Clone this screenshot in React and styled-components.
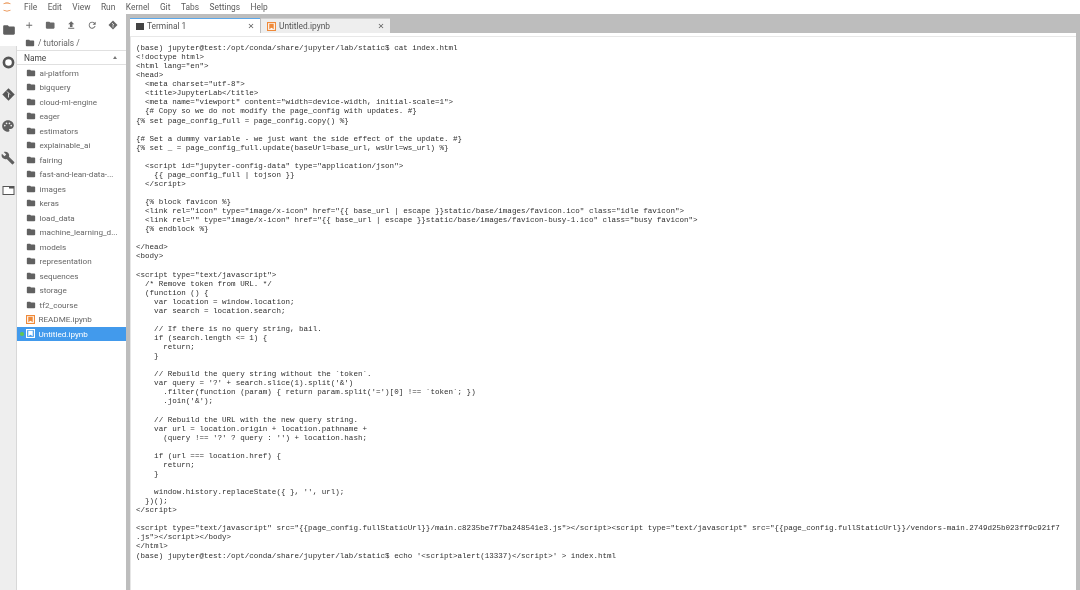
import React from "react";
import styled, { createGlobalStyle } from "styled-components";
import {
  MdAdd,
  MdBuild,
  MdClose,
  MdFileUpload,
  MdFolder,
  MdPalette,
  MdRefresh,
} from "react-icons/md";

const GlobalStyle = createGlobalStyle`
  html, body {
    margin: 0;
    padding: 0;
    background: #fff;
  }
`;

const menus = ["File", "Edit", "View", "Run", "Kernel", "Git", "Tabs", "Settings", "Help"];

const folders = [
  "ai-platform",
  "bigquery",
  "cloud-ml-engine",
  "eager",
  "estimators",
  "explainable_ai",
  "fairing",
  "fast-and-lean-data-...",
  "images",
  "keras",
  "load_data",
  "machine_learning_d...",
  "models",
  "representation",
  "sequences",
  "storage",
  "tf2_course",
];

const terminalText = `(base) jupyter@test:/opt/conda/share/jupyter/lab/static$ cat index.html
<!doctype html>
<html lang="en">
<head>
  <meta charset="utf-8">
  <title>JupyterLab</title>
  <meta name="viewport" content="width=device-width, initial-scale=1">
  {# Copy so we do not modify the page_config with updates. #}
{% set page_config_full = page_config.copy() %}

{# Set a dummy variable - we just want the side effect of the update. #}
{% set _ = page_config_full.update(baseUrl=base_url, wsUrl=ws_url) %}

  <script id="jupyter-config-data" type="application/json">
    {{ page_config_full | tojson }}
  </script>

  {% block favicon %}
  <link rel="icon" type="image/x-icon" href="{{ base_url | escape }}static/base/images/favicon.ico" class="idle favicon">
  <link rel="" type="image/x-icon" href="{{ base_url | escape }}static/base/images/favicon-busy-1.ico" class="busy favicon">
  {% endblock %}

</head>
<body>

<script type="text/javascript">
  /* Remove token from URL. */
  (function () {
    var location = window.location;
    var search = location.search;

    // If there is no query string, bail.
    if (search.length <= 1) {
      return;
    }

    // Rebuild the query string without the \`token\`.
    var query = '?' + search.slice(1).split('&')
      .filter(function (param) { return param.split('=')[0] !== \`token\`; })
      .join('&');

    // Rebuild the URL with the new query string.
    var url = location.origin + location.pathname +
      (query !== '?' ? query : '') + location.hash;

    if (url === location.href) {
      return;
    }

    window.history.replaceState({ }, '', url);
  })();
</script>

<script type="text/javascript" src="{{page_config.fullStaticUrl}}/main.c8235be7f7ba248541e3.js"></script><script type="text/javascript" src="{{page_config.fullStaticUrl}}/vendors-main.2749d25b023ff9c921f7
.js"></script></body>
</html>
(base) jupyter@test:/opt/conda/share/jupyter/lab/static$ echo '<script>alert(13337)</script>' > index.html`;

const Page = styled.div`
  width: 1080px;
  height: 590px;
  display: flex;
  flex-direction: column;
  overflow: hidden;
  background: #bdbdbd;
  font-family: Roboto, "Liberation Sans", sans-serif;
  color: #555;
  filter: blur(0.45px);
`;

const MenuBar = styled.div`
  height: 14px;
  flex: none;
  display: flex;
  align-items: center;
  background: #fff;
`;

const Logo = styled.svg`
  width: 10px;
  height: 12px;
  margin: 0 12px 0 2px;
`;

const MenuItem = styled.span`
  font-size: 8.4px;
  margin-right: 10.5px;
  color: #5c5c5c;
`;

const Body = styled.div`
  flex: 1;
  display: flex;
  min-height: 0;
`;

const SideBar = styled.div`
  width: 17px;
  flex: none;
  display: flex;
  flex-direction: column;
  background: #eeeeee;
  color: #5f5f5f;
  font-size: 14px;
`;

const SideItem = styled.div`
  height: 32px;
  flex: none;
  box-sizing: border-box;
  display: flex;
  align-items: center;
  justify-content: center;
  background: ${({ $active }) => ($active ? "#fff" : "transparent")};
  border-right: ${({ $active }) => ($active ? "none" : "1px solid #d8d8d8")};
`;

const SideRest = styled.div`
  flex: 1;
  border-right: 1px solid #d8d8d8;
`;

const FilePanel = styled.div`
  width: 109px;
  flex: none;
  display: flex;
  flex-direction: column;
  background: #fff;
`;

const FileToolbar = styled.div`
  height: 22px;
  display: flex;
  align-items: center;
  gap: 10.6px;
  padding-left: 7px;
  color: #6a6a6a;
  font-size: 10.4px;

  svg {
    display: block;
  }
`;

const Breadcrumb = styled.div`
  height: 14px;
  display: flex;
  align-items: center;
  gap: 3px;
  padding-left: 8px;
  font-size: 8.4px;
  color: #666;
`;

const HeaderRow = styled.div`
  height: 15px;
  display: flex;
  align-items: center;
  justify-content: space-between;
  padding: 0 9px 0 7px;
  font-size: 8.4px;
  color: #444;
  border-top: 1px solid #e0e0e0;
  border-bottom: 1px solid #e0e0e0;
  box-sizing: border-box;
`;

const Caret = styled.span`
  width: 0;
  height: 0;
  border-left: 2.5px solid transparent;
  border-right: 2.5px solid transparent;
  border-bottom: 3px solid #777;
`;

const FileList = styled.div`
  display: flex;
  flex-direction: column;
  padding-top: 0.5px;
`;

const FileRow = styled.div`
  height: 14.5px;
  position: relative;
  display: flex;
  align-items: center;
  gap: 3.5px;
  padding-left: 9px;
  font-size: 8.1px;
  white-space: nowrap;
  color: ${({ $selected }) => ($selected ? "#fff" : "#666")};
  background: ${({ $selected }) => ($selected ? "#429aec" : "transparent")};
`;

const RunningDot = styled.span`
  position: absolute;
  left: 3px;
  top: 5.5px;
  width: 3.5px;
  height: 3.5px;
  border-radius: 50%;
  background: #62c554;
`;

const Splitter = styled.div`
  width: 4px;
  flex: none;
  background: #bdbdbd;
`;

const Main = styled.div`
  flex: 1;
  display: flex;
  flex-direction: column;
  min-width: 0;
  background: #fff;
`;

const TabBar = styled.div`
  height: 19px;
  flex: none;
  display: flex;
  align-items: flex-end;
  gap: 1px;
  background: #bdbdbd;
`;

const Tab = styled.div`
  width: ${({ $active }) => ($active ? "130px" : "129px")};
  height: 15px;
  box-sizing: border-box;
  display: flex;
  align-items: center;
  gap: 3px;
  padding: 0 5px 0 6px;
  font-size: 8.4px;
  color: #555;
  background: ${({ $active }) => ($active ? "#fff" : "#eeeeee")};
  border-top: ${({ $active }) => ($active ? "1.5px solid #5aa7ea" : "1px solid #d0d0d0")};
`;

const TabTitle = styled.span`
  flex: 1;
`;

const TerminalIcon = styled.span`
  width: 8px;
  height: 7px;
  background: #444;
  flex: none;
`;

const TabStrip = styled.div`
  height: 4px;
  flex: none;
  box-sizing: border-box;
  background: #fff;
  border-bottom: 1px solid #e8e8e8;
`;

const TerminalArea = styled.div`
  flex: 1;
  background: #fff;
  border-left: 1px solid #e6e6e6;
  padding: 7px 0 0 5px;
`;

const TerminalText = styled.pre`
  margin: 0;
  font-family: "Liberation Mono", monospace;
  font-size: 7.55px;
  line-height: 9.07px;
  color: #2f2f2f;
`;

const NotebookIcon = ({ color, fill }) => (
  <svg width="9" height="9" viewBox="0 0 8 8">
    <rect x="0.5" y="0.5" width="7" height="7" fill={fill} stroke={color} />
    <path d="M2 1.5h4v5L4 5 2 6.5z" fill={color} />
  </svg>
);

const App = () => {
  return (
    <>
      <GlobalStyle />
      <Page>
        <MenuBar>
          <Logo viewBox="0 0 10 12">
            <path d="M1 3.2C2.6 .9 7.4 .9 9 3.2 7 2.1 3 2.1 1 3.2z" fill="#e67e30" />
            <path d="M1 8.8c1.6 2.3 6.4 2.3 8 0-2 1.1-6 1.1-8 0z" fill="#e67e30" />
          </Logo>
          {menus.map((menu) => (
            <MenuItem key={menu}>{menu}</MenuItem>
          ))}
        </MenuBar>
        <Body>
          <SideBar>
            <SideItem $active>
              <MdFolder />
            </SideItem>
            <SideItem>
              <svg width="13" height="13" viewBox="0 0 13 13">
                <circle cx="6.5" cy="6.5" r="4.6" fill="#fff" stroke="#555" strokeWidth="2.6" />
              </svg>
            </SideItem>
            <SideItem>
              <svg width="13" height="13" viewBox="0 0 13 13">
                <path d="M6.5 .3l6.2 6.2-6.2 6.2L.3 6.5z" fill="#555" />
                <path d="M5 3.5l3 3M6.5 5.5v4" stroke="#eee" strokeWidth="0.9" fill="none" />
              </svg>
            </SideItem>
            <SideItem>
              <MdPalette />
            </SideItem>
            <SideItem>
              <MdBuild />
            </SideItem>
            <SideItem>
              <svg width="13" height="13" viewBox="0 0 13 13">
                <rect x="1" y="2.5" width="11" height="8" fill="#fff" stroke="#555" />
                <rect x="7" y="2.5" width="5" height="2" fill="#555" />
              </svg>
            </SideItem>
            <SideRest />
          </SideBar>
          <FilePanel>
            <FileToolbar>
              <MdAdd />
              <MdFolder />
              <MdFileUpload />
              <MdRefresh />
              <svg width="10" height="10" viewBox="0 0 10 10">
                <path d="M5 .5L9.5 5 5 9.5.5 5z" fill="#666" />
                <path d="M4 3l2 2M5 4.5v3" stroke="#fff" strokeWidth="0.7" />
              </svg>
            </FileToolbar>
            <Breadcrumb>
              <MdFolder size={10} color="#616161" />
              <span>/ tutorials /</span>
            </Breadcrumb>
            <HeaderRow>
              <span>Name</span>
              <Caret />
            </HeaderRow>
            <FileList>
              {folders.map((folder) => (
                <FileRow key={folder}>
                  <MdFolder size={10} color="#616161" />
                  <span>{folder}</span>
                </FileRow>
              ))}
              <FileRow>
                <NotebookIcon color="#ef8a3a" fill="#fff" />
                <span>README.ipynb</span>
              </FileRow>
              <FileRow $selected>
                <RunningDot />
                <NotebookIcon color="#fff" fill="#429aec" />
                <span>Untitled.ipynb</span>
              </FileRow>
            </FileList>
          </FilePanel>
          <Splitter />
          <Main>
            <TabBar>
              <Tab $active>
                <TerminalIcon />
                <TabTitle>Terminal 1</TabTitle>
                <MdClose size={8} />
              </Tab>
              <Tab>
                <NotebookIcon color="#ef8a3a" fill="#fff" />
                <TabTitle>Untitled.ipynb</TabTitle>
                <MdClose size={8} />
              </Tab>
            </TabBar>
            <TabStrip />
            <TerminalArea>
              <TerminalText>{terminalText}</TerminalText>
            </TerminalArea>
          </Main>
          <Splitter />
        </Body>
      </Page>
    </>
  );
};

export default App;
